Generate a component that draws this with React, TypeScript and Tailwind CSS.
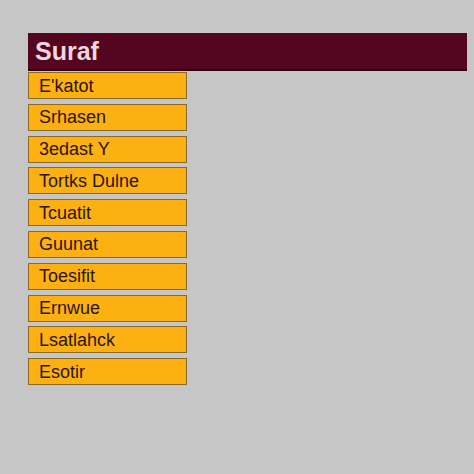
const items = [
  "E'katot",
  'Srhasen',
  '3edast Y',
  'Tortks Dulne',
  'Tcuatit',
  'Guunat',
  'Toesifit',
  'Ernwue',
  'Lsatlahck',
  'Esotir',
];

export default function App() {
  return (
    <div className="h-[474px] w-[474px] bg-[#c6c6c6] pt-[33px] pl-[28px] font-['Liberation_Sans',Arial,sans-serif]">
      <div className="flex h-[38px] w-[439px] items-center border-b-2 border-[#2a0010] bg-[#55051f] pl-[7px]">
        <span className="text-[25px] font-bold leading-none text-[#f2d6de]">Suraf</span>
      </div>
      <ul className="mt-[1px] flex w-[159px] flex-col gap-[4.8px]">
        {items.map((label) => (
          <li
            key={label}
            className="flex h-[27px] items-center border border-[#8a6a25] bg-[#fdb012] pl-[10px] text-[18px] leading-none text-[#2a1606]"
          >
            {label}
          </li>
        ))}
      </ul>
    </div>
  );
}
